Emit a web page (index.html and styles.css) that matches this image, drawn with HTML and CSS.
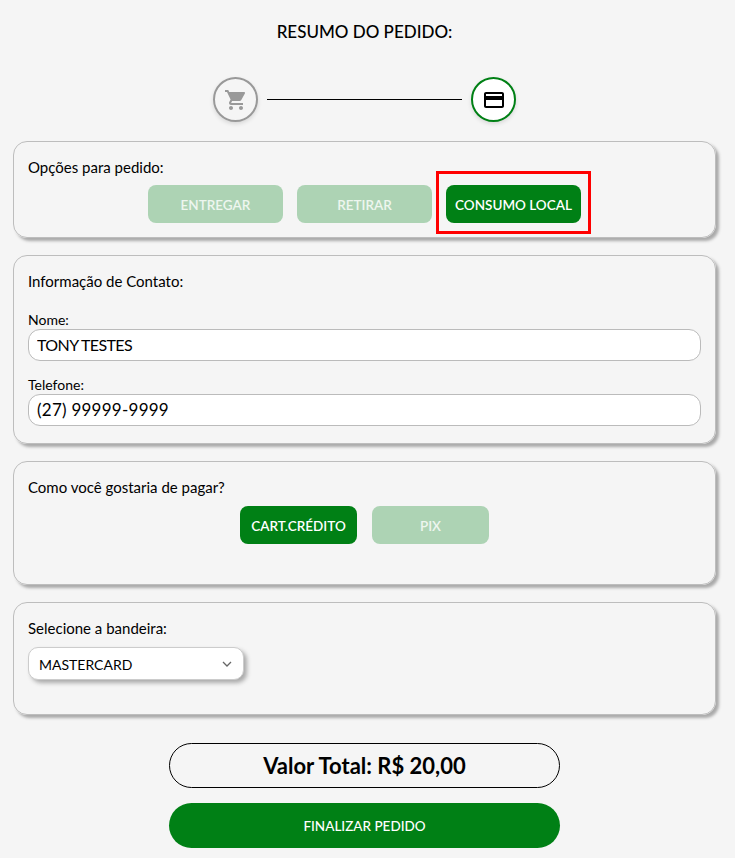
FILE: index.html
```html
<!DOCTYPE html>
<html lang="pt-BR">
<head>
<meta charset="utf-8">
<title>Resumo do pedido</title>
<link rel="stylesheet" href="styles.css">
</head>
<body>
<main class="page">
  <h1 class="title">RESUMO DO PEDIDO:</h1>
  <div class="stepper">
    <div class="step step-done">
      <svg width="24" height="24" viewBox="0 0 24 24"><path fill="#999" d="M7 18c-1.1 0-1.99.9-1.99 2S5.900 22 7 22s2-.9 2-2-.9-2-2-2zM1 2v2h2l3.600 7.590-1.350 2.450c-.16.280-.25.610-.25.960 0 1.100.9 2 2 2h12v-2H7.420c-.14 0-.25-.11-.25-.25l.03-.12.9-1.630h7.450c.75 0 1.410-.41 1.750-1.030l3.580-6.490c.08-.14.120-.31.120-.48 0-.55-.45-1-1-1H5.210l-.94-2H1zm16 16c-1.100 0-1.990.9-1.990 2s.89 2 1.990 2 2-.9 2-2-.9-2-2-2z"/></svg>
    </div>
    <div class="step-line"></div>
    <div class="step step-active">
      <svg width="24" height="24" viewBox="0 0 24 24"><path fill="#000" d="M20 4H4c-1.110 0-1.990.89-1.990 2L2 18c0 1.110.89 2 2 2h16c1.110 0 2-.89 2-2V6c0-1.110-.89-2-2-2zm0 14H4v-6h16v6zm0-10H4V6h16v2z"/></svg>
    </div>
  </div>

  <section class="card card-order">
    <p class="label">Opções para pedido:</p>
    <div class="options options-order">
      <button class="opt opt-off">ENTREGAR</button>
      <button class="opt opt-off">RETIRAR</button>
      <button class="opt opt-on opt-marked">CONSUMO LOCAL</button>
    </div>
  </section>

  <section class="card card-contact">
    <p class="label">Informação de Contato:</p>
    <label class="field field-name">Nome:
      <input class="input input-name" type="text" value="TONY TESTES">
    </label>
    <label class="field field-phone">Telefone:
      <input class="input input-phone" type="text" value="(27) 99999-9999">
    </label>
  </section>

  <section class="card card-pay">
    <p class="label">Como você gostaria de pagar?</p>
    <div class="options options-pay">
      <button class="opt opt-pay opt-on">CART.CRÉDITO</button>
      <button class="opt opt-pay opt-off">PIX</button>
    </div>
  </section>

  <section class="card card-brand">
    <p class="label">Selecione a bandeira:</p>
    <div class="select">
      <span>MASTERCARD</span>
      <svg width="10" height="6" viewBox="0 0 10 6"><path d="M1 1l4 4 4-4" fill="none" stroke="#666" stroke-width="1.300"/></svg>
    </div>
  </section>

  <div class="total">Valor Total: R$ 20,00</div>
  <button class="finish">FINALIZAR PEDIDO</button>
</main>
</body>
</html>
```
FILE: styles.css
```css
* { box-sizing: border-box; }
html, body { margin: 0; background: #f5f5f5; }
body { font-family: "Lato", "Liberation Sans", sans-serif; color: #000; height: 858px; overflow: hidden; }
.page { padding: 21px 19px 0 13px; display: flex; flex-direction: column; }
.title { margin: 0; height: 22px; line-height: 22px; text-align: center; font-size: 17px; font-weight: 500; }
.stepper { margin-top: 34px; display: flex; align-items: center; justify-content: center; gap: 9px; }
.step { width: 45px; height: 45px; border-radius: 50%; border: 2px solid #999; display: flex; align-items: center; justify-content: center; box-shadow: 0 2px 4px rgba(0,0,0,.12); }
.step-active { border-color: #008015; background: #fff; }
.step-line { width: 195px; height: 1px; background: #000; }
.card { border: 1px solid #bdbdbd; border-radius: 14px; box-shadow: 3px 3px 3px #aaa; padding: 16px 14px 0; margin-bottom: 17px; }
.card-order { margin-top: 19px; height: 97px; }
.card-contact { height: 189px; }
.card-pay { height: 124px; }
.card-brand { height: 113px; margin-bottom: 28px; }
.label { margin: 0; font-size: 15px; line-height: 18px; }
.options { display: flex; justify-content: center; }
.options-order { margin-top: 9px; gap: 14px; }
.options-pay { margin-top: 10px; gap: 15px; }
.opt { width: 135px; height: 38px; border: 0; border-radius: 8px; color: #fff; font: 600 13.5px "Lato", sans-serif; padding: 1px 0 0; }
.opt-pay { width: 117px; }
.opt-on { background: #008015; }
.opt-off { background: #add3b4; color: #eef6ef; }
.opt-marked { position: relative; }
.opt-marked::after { content: ""; position: absolute; inset: -14px -10px -11px; border: 3px solid #f00; }
.field { display: block; font-size: 14px; line-height: 16px; }
.field-name { margin-top: 22px; }
.field-phone { margin-top: 16px; }
.input { display: block; width: 100%; height: 32px; margin-top: 1px; border: 1px solid #bbb; border-radius: 12px; background: #fff; padding: 0 8px 1px; font: 400 16px "Lato", sans-serif; color: #000; }
.input-name { letter-spacing: -.6px; }
.input-phone { font-size: 17px; letter-spacing: .25px; }
.select { margin-top: 10px; width: 216px; height: 33px; background: #fff; border: 1px solid #ccc; border-radius: 10px; box-shadow: 3px 3px 4px #aaa; display: flex; align-items: center; justify-content: space-between; padding: 1px 11px 0 10px; font-size: 14px; }
.total { align-self: center; width: 391px; height: 45px; border: 1px solid #000; border-radius: 23px; display: flex; align-items: center; justify-content: center; font-size: 22px; font-weight: 700; }
.finish { align-self: center; margin-top: 15px; width: 391px; height: 45px; border: 0; border-radius: 23px; background: #008015; color: #fff; font: 500 13.5px "Lato", sans-serif; }
```
